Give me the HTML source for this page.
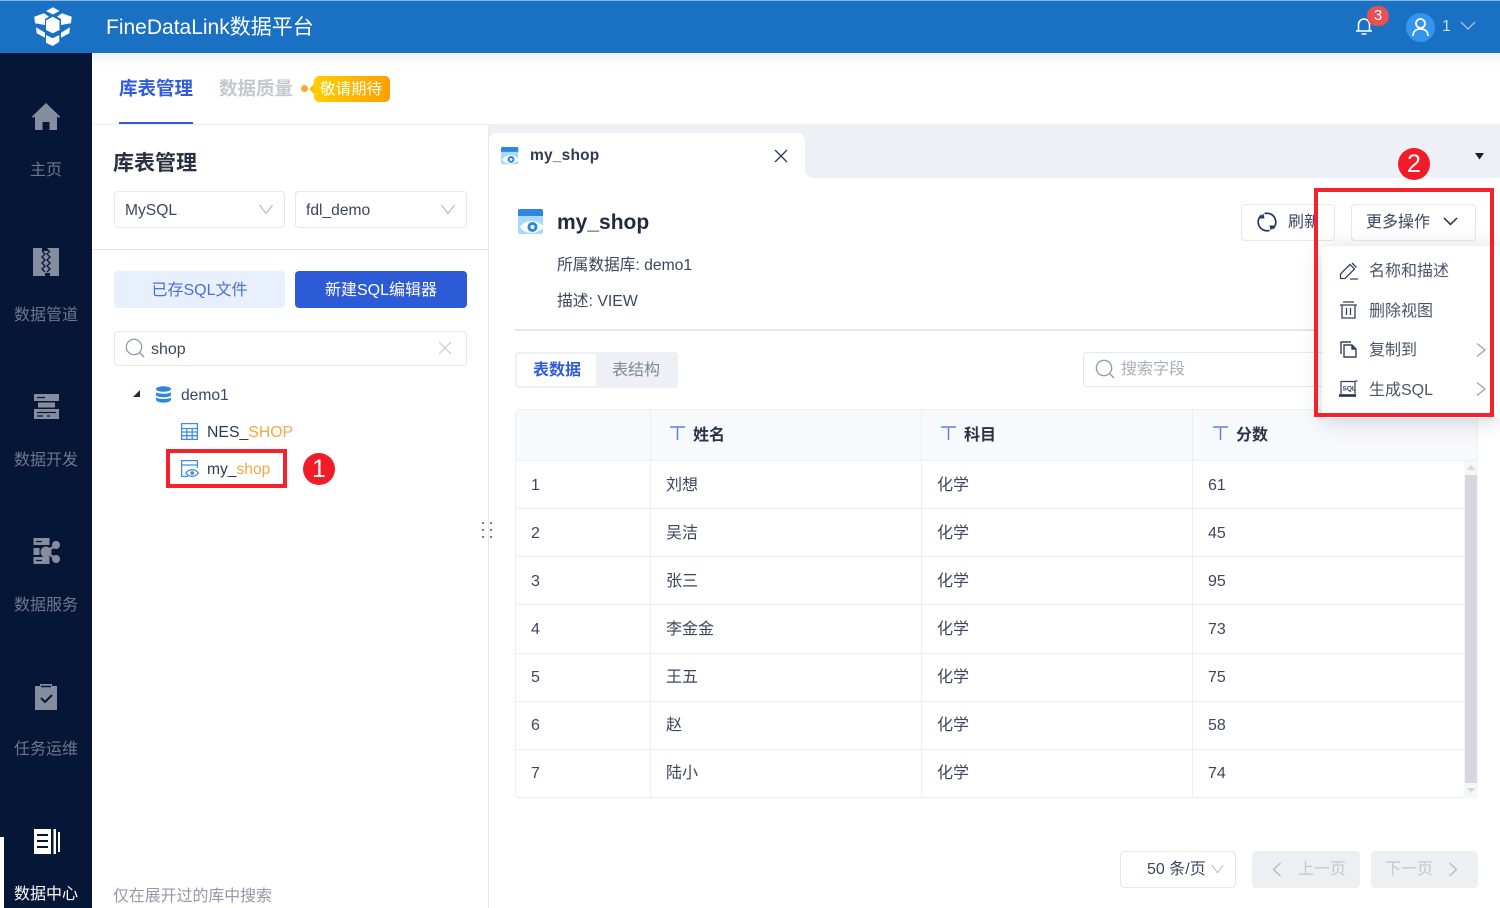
<!DOCTYPE html>
<html lang="zh"><head><meta charset="utf-8"><title>FineDataLink</title>
<style>
*{box-sizing:border-box}
html,body{margin:0;padding:0}
body{width:1500px;height:908px;overflow:hidden;position:relative;background:#fff;font-family:"Liberation Sans","Noto Sans CJK SC",sans-serif;color:#2b3a55;font-size:16px}
.a{position:absolute}
.t{position:absolute;white-space:nowrap;line-height:22px;margin-top:1px}
svg{position:absolute;overflow:visible}
.side{font-size:16px;color:#6f7789;width:92px;text-align:center;left:0}
.box{position:absolute;background:#fff;border:1px solid #e4e7f0;border-radius:4px}
.cell{font-size:16px;color:#3a4760}
.l{font-size:15.600px}
.hl{position:absolute;height:1px;background:#eceef4;left:516px;width:949px}
.vl{position:absolute;width:1px;background:#eceef4}
.red{position:absolute;border:4px solid #f5222d}
.num{position:absolute;width:32px;height:32px;border-radius:50%;background:#f01c28;color:#fff;text-align:center;font-size:25px;line-height:32px}
</style></head><body>

<div class="a" style="left:0;top:0;width:1500px;height:53px;background:#1a71c4;border-top:1px solid #8db6dd"></div>
<svg style="left:33px;top:7px" width="40" height="40" viewBox="0 0 40 40" fill="#fff"><path d="M13 4l7-3.700L26.500 4 20 7.500z"/><path d="M1.300 9.700L11 6.300l5 3.400-4 2.300v6l-10-1.700z"/><path d="M38.700 9.700L29 6.300l-5 3.400 4 2.300v6l10-1.700z"/><path d="M13 13.500l6.700-3.800 6.800 3.800v9.500l-6.800 3.300-6.700-3.300z"/><path d="M3 20.300l9 5.400v5l-8.300-4.400z"/><path d="M37 20.300l-9 5.400v5l8.300-4.400z"/><path d="M13 28l6.700 3.300 6.600-3.300v6.700L19.700 39 13 35.700z"/></svg>
<div class="t" style="left:106px;top:14px;font-size:21px;line-height:26px;color:#fff">FineDataLink数据平台</div>

<svg style="left:1354px;top:16px" width="20" height="20" viewBox="0 0 20 20" fill="none" stroke="#fff" stroke-width="1.600"><path d="M2 15h16M4.500 15V8.500a5.500 5.500 0 0 1 11 0V15M7.500 18h5"/></svg>
<div class="a" style="left:1367px;top:6px;width:22px;height:20px;border-radius:10px;background:#e85151;color:#fff;font-size:15px;line-height:20px;text-align:center">3</div>
<div class="a" style="left:1406px;top:13px;width:29px;height:29px;border-radius:50%;background:#3395f0"></div>
<svg style="left:1406px;top:13px" width="29" height="29" viewBox="0 0 29 29" fill="none" stroke="#fff" stroke-width="1.800"><circle cx="14.500" cy="10.500" r="4.500"/><path d="M7 23c0-4.500 3-7 7.500-7s7.500 2.500 7.500 7"/></svg>
<div class="t" style="left:1442px;top:15px;font-size:16px;color:#c7dcf2">1</div>
<svg style="left:1460px;top:21px" width="16" height="10" viewBox="0 0 16 10" fill="none" stroke="#9dbfe3" stroke-width="1.400"><path d="M1 1l7 7 7-7"/></svg>

<div class="a" style="left:0;top:53px;width:92px;height:855px;background:#061636"></div>
<svg style="left:32px;top:103px" width="28" height="28" viewBox="0 0 28 28" fill="#868d9e"><path d="M14 0L28 13.500l-1 1.500-2-1.500V27h-7.500v-8h-7v8H3V13.500L1 15l-1-1.500z"/></svg>
<div class="t side" style="top:159px">主页</div>
<svg style="left:33px;top:248px" width="26" height="28" viewBox="0 0 26 28" fill="#868d9e"><path d="M0 0h26v28H0z"/><path d="M9 0h5l3 3H9zM12 25h5v3h-5z" fill="#061636"/><path d="M9 3l3 3-3 3 3 3-3 3 3 3-3 3 3 3M17 3l-3 3 3 3-3 3 3 3-3 3 3 3-3 3" fill="none" stroke="#061636" stroke-width="1.300"/></svg>
<div class="t side" style="top:304px">数据管道</div>
<svg style="left:33px;top:393px" width="27" height="27" viewBox="0 0 27 27" fill="#868d9e"><path d="M1 1h25v7H1zM5 9.500h17v5H5zM1 16h25v10H1z"/><path d="M4 4.500h8M4 19.500h19M4 23h6M14 23h3" stroke="#061636" stroke-width="1.300"/></svg>
<div class="t side" style="top:449px">数据开发</div>
<svg style="left:33px;top:538px" width="27" height="27" viewBox="0 0 27 27" fill="#868d9e"><path d="M.5 0h16v7H.5zM.5 10h6v7h-6zM.5 19h16v7H.5z"/><path d="M3 3.500h6M3 22.500h6" stroke="#061636" stroke-width="1.300"/><circle cx="23" cy="7" r="4"/><circle cx="23" cy="21" r="4"/><circle cx="13" cy="14" r="5.500"/><path d="M13 14L23 7M13 14l10 7" stroke="#868d9e" stroke-width="2.500"/></svg>
<div class="t side" style="top:594px">数据服务</div>
<svg style="left:34px;top:683px" width="24" height="27" viewBox="0 0 24 27" fill="#868d9e"><path d="M1 3h5V1h12v2h5v24H1z"/><path d="M7 3.500h10" stroke="#061636" stroke-width="1.500"/><path d="M7 15l4 4 7-7" fill="none" stroke="#061636" stroke-width="2"/></svg>
<div class="t side" style="top:738px">任务运维</div>
<svg style="left:33px;top:828px" width="27" height="27" viewBox="0 0 27 27" fill="#fff"><path d="M1 1h17v25H1z"/><path d="M4 7h11M4 13h11M4 19h11" stroke="#061636" stroke-width="2"/><path d="M20.500 1h2.500v25h-2.500zM25 4h2v20h-2z"/></svg>
<div class="t side" style="top:883px;color:#fff">数据中心</div>
<div class="a" style="left:0;top:837px;width:4px;height:71px;background:#fff"></div>

<div class="a" style="left:92px;top:53px;width:1408px;height:14px;background:linear-gradient(#f0f1f3,#fff)"></div>
<div class="t" style="left:119px;top:77px;font-size:18.500px;font-weight:700;color:#2f5bdc">库表管理</div>
<div class="a" style="left:119px;top:122px;width:74px;height:3px;background:#2f5bdc"></div>
<div class="t" style="left:219px;top:77px;font-size:18.500px;font-weight:700;color:#c4c7cd">数据质量</div>
<div class="a" style="left:301px;top:85px;width:7px;height:7px;border-radius:50%;background:#f6a83c"></div>
<div class="a" style="left:309px;top:84px;width:0;height:0;border:5px solid transparent;border-right:5px solid #ffc107;border-left:0"></div>
<div class="a" style="left:314px;top:76px;width:76px;height:26px;border-radius:5px;background:linear-gradient(90deg,#ffce00,#ff9f00)"></div>
<div class="t" style="left:320px;top:78px;font-size:15.500px;color:#fff">敬请期待</div>
<div class="a" style="left:92px;top:124px;width:396px;height:1px;background:#eceef3"></div>

<div class="t" style="left:113px;top:150px;font-size:21px;line-height:26px;font-weight:700;color:#2a3040">库表管理</div>
<div class="box" style="left:114px;top:191px;width:171px;height:37px"></div>
<div class="t l" style="left:125px;top:199px;color:#3a4760">MySQL</div>
<svg style="left:259px;top:204px" width="14" height="11" viewBox="0 0 14 11" fill="none" stroke="#aeb4c2" stroke-width="1.100"><path d="M.5 1l6.500 8.500L13.500 1"/></svg>
<div class="box" style="left:295px;top:191px;width:172px;height:37px"></div>
<div class="t l" style="left:306px;top:199px;color:#3a4760">fdl_demo</div>
<svg style="left:441px;top:204px" width="14" height="11" viewBox="0 0 14 11" fill="none" stroke="#aeb4c2" stroke-width="1.100"><path d="M.5 1l6.500 8.500L13.500 1"/></svg>
<div class="a" style="left:92px;top:249px;width:396px;height:1px;background:#e4e6ec"></div>
<div class="a" style="left:114px;top:271px;width:171px;height:37px;border-radius:4px;background:#e8f0fe"></div>
<div class="t" style="left:114px;top:279px;width:171px;text-align:center;color:#4a6fd6">已存SQL文件</div>
<div class="a" style="left:295px;top:271px;width:172px;height:37px;border-radius:4px;background:#2d5bd8"></div>
<div class="t" style="left:295px;top:279px;width:172px;text-align:center;color:#fff">新建SQL编辑器</div>

<div class="box" style="left:114px;top:331px;width:353px;height:35px"></div>
<svg style="left:125px;top:338px" width="20" height="20" viewBox="0 0 20 20" fill="none" stroke="#8f9aad" stroke-width="1.300"><circle cx="9" cy="9" r="7.700"/><path d="M14.500 14.500L19 19"/></svg>
<div class="t" style="left:151px;top:338px;color:#3a4760">shop</div>
<svg style="left:438px;top:341px" width="14" height="14" viewBox="0 0 14 14" stroke="#c3c8d2" stroke-width="1.100"><path d="M1 1l12 12M13 1L1 13"/></svg>

<svg style="left:133px;top:390px" width="8" height="8" viewBox="0 0 8 8"><path d="M7 0v7H0z" fill="#1d2a3f"/></svg>
<svg style="left:155px;top:386px" width="17" height="17" viewBox="0 0 17 17" fill="#2f86dd"><ellipse cx="8.500" cy="3" rx="7.500" ry="2.800"/><path d="M1 6.300c2 2 13 2 15 0v3.200c-2 2.300-13 2.300-15 0zM1 11.500c2 2 13 2 15 0v2.500c-2 3.500-13 3.500-15 0z"/></svg>
<div class="t l" style="left:181px;top:384px;color:#3a4760">demo1</div>
<svg style="left:181px;top:423px" width="17" height="17" viewBox="0 0 17 17" fill="none" stroke="#3f8fe0" stroke-width="1.300"><path d="M.6.600h15.800v15.800H.6zM.6 5.500h15.800M.6 9h15.800M.6 12.700h15.800M5.800 5.500v11M11.200 5.500v11"/></svg>
<div class="t" style="left:207px;top:421px;font-size:15.800px;color:#2b3a55">NES_<span style="color:#f7a743">SHOP</span></div>
<svg style="left:181px;top:460px" width="18" height="18" viewBox="0 0 18 18" fill="none" stroke="#3f8fe0" stroke-width="1.300"><path d="M7 16.400H.6V.6h15.800V8M.6 5h15.800"/><path d="M5 13c3-4.500 9-4.500 12.500 0-3.500 4.500-9.500 4.500-12.500 0z" fill="#fff"/><circle cx="11.200" cy="13" r="1.900" fill="#3f8fe0" stroke="none"/></svg>
<div class="t" style="left:207px;top:458px;font-size:15.600px;color:#2b3a55">my_<span style="color:#f7a743">shop</span></div>
<div class="red" style="left:166px;top:449px;width:121px;height:39px"></div>
<div class="num" style="left:303px;top:453px">1</div>
<div class="t" style="left:113px;top:885px;font-size:15.900px;color:#9298a5">仅在展开过的库中搜索</div>

<div class="a" style="left:488px;top:124px;width:1px;height:784px;background:#e6e8ee"></div>
<div class="a" style="left:489px;top:124px;width:1011px;height:54px;background:#eef0f5"></div>
<div class="a" style="left:489px;top:133px;width:316px;height:46px;background:#fff;border-radius:8px 8px 0 0"></div>
<div class="a" style="left:805px;top:168px;width:10px;height:10px;background:#fff"></div>
<div class="a" style="left:805px;top:160px;width:20px;height:18px;background:#eef0f5;border-radius:0 0 0 8px"></div>
<svg style="left:501px;top:147px" width="18" height="18" viewBox="0 0 26 26"><rect y="0" width="25" height="25" rx="2" fill="#a8d8fb"/><path d="M0 2a2 2 0 0 1 2-2h21a2 2 0 0 1 2 2v5H0z" fill="#2f86dd"/><path d="M2 18c5-8 17-8 24 0-7 8-19 8-24 0z" fill="#fff"/><circle cx="14.500" cy="18" r="5" fill="#2f86dd"/><circle cx="14.500" cy="18" r="2" fill="#fff"/></svg>
<div class="t" style="left:530px;top:144px;font-size:15.500px;font-weight:700;color:#2f3b50;letter-spacing:.2px">my_shop</div>
<svg style="left:774px;top:149px" width="14" height="14" viewBox="0 0 14 14" stroke="#2b3a55" stroke-width="1.300"><path d="M1 1l12 12M13 1L1 13"/></svg>
<svg style="left:1475px;top:153px" width="9" height="7" viewBox="0 0 9 7"><path d="M0 0h9L4.500 6.500z" fill="#14213a"/></svg>

<svg style="left:518px;top:209px" width="26" height="26" viewBox="0 0 26 26"><rect y="0" width="25" height="25" rx="2" fill="#a8d8fb"/><path d="M0 2a2 2 0 0 1 2-2h21a2 2 0 0 1 2 2v5H0z" fill="#2f86dd"/><path d="M2 18c5-8 17-8 24 0-7 8-19 8-24 0z" fill="#fff"/><circle cx="14.500" cy="18" r="5" fill="#2f86dd"/><circle cx="14.500" cy="18" r="2" fill="#fff"/></svg>
<div class="t" style="left:557px;top:209px;font-size:21px;line-height:26px;font-weight:700;color:#1f2a3d;letter-spacing:0">my_shop</div>
<div class="t" style="left:557px;top:254px;font-size:15.700px;color:#3a4760">所属数据库: demo1</div>
<div class="t" style="left:557px;top:290px;font-size:15.800px;color:#3a4760">描述: VIEW</div>
<div class="a" style="left:515px;top:329px;width:800px;height:2px;background:#e3e5ea"></div>

<div class="box" style="left:1241px;top:204px;width:94px;height:37px"></div>
<svg style="left:1257px;top:212px" width="20" height="20" viewBox="0 0 20 20" fill="none" stroke="#1f3a60" stroke-width="1.700"><path d="M7.500 1.600A8.800 8.800 0 0 1 15.500 16.900"/><path d="M12.500 18.400A8.800 8.800 0 0 1 4.500 3.100"/><path d="M2.500 6.500L7.500 6.500 6.500 1.500zM17.500 13.500L12.500 13.500 13.500 18.500z" fill="#1f3a60" stroke="none"/></svg>
<div class="t" style="left:1288px;top:211px;color:#3a4760;width:27px;overflow:hidden">刷新</div>
<div class="box" style="left:1351px;top:204px;width:125px;height:37px"></div>
<div class="t" style="left:1366px;top:211px;color:#3a4760">更多操作</div>
<svg style="left:1443px;top:217px" width="15" height="9" viewBox="0 0 15 9" fill="none" stroke="#1f2a3d" stroke-width="1.500"><path d="M1 1l6.500 6.500L14 1"/></svg>

<div class="a" style="left:515px;top:352px;width:163px;height:36px;border-radius:4px;background:#eef0f5"></div>
<div class="a" style="left:517px;top:354px;width:79px;height:32px;border-radius:3px;background:#fff"></div>
<div class="t" style="left:533px;top:359px;font-weight:700;color:#2f5bdc">表数据</div>
<div class="t" style="left:612px;top:359px;color:#7f8694">表结构</div>
<div class="box" style="left:1083px;top:352px;width:250px;height:35px"></div>
<svg style="left:1095px;top:359px" width="20" height="20" viewBox="0 0 20 20" fill="none" stroke="#8f9aad" stroke-width="1.300"><circle cx="9" cy="9" r="7.700"/><path d="M14.500 14.500L19 19"/></svg>
<div class="t" style="left:1121px;top:358px;color:#a9aeb8">搜索字段</div>

<div class="a" style="left:515px;top:409px;width:963px;height:389px;border:1px solid #eceef4;border-radius:4px;background:#fff"></div>
<div class="a" style="left:516px;top:410px;width:961px;height:51px;background:#f8f9fc;border-bottom:1px solid #eceef4"></div>
<div class="vl" style="left:650px;top:410px;height:387px"></div>
<div class="vl" style="left:921px;top:410px;height:387px"></div>
<div class="vl" style="left:1192px;top:410px;height:387px"></div>
<div class="hl" style="top:508px"></div><div class="hl" style="top:556px"></div><div class="hl" style="top:604px"></div><div class="hl" style="top:653px"></div><div class="hl" style="top:701px"></div><div class="hl" style="top:749px"></div>

<svg style="left:670px;top:426px" width="15" height="14" viewBox="0 0 15 14" fill="none" stroke="#5c82d0" stroke-width="1.500"><path d="M0 1h15M7.500 1v13"/></svg>
<div class="t" style="left:693px;top:424px;font-weight:700;color:#2b3447">姓名</div>
<svg style="left:941px;top:426px" width="15" height="14" viewBox="0 0 15 14" fill="none" stroke="#5c82d0" stroke-width="1.500"><path d="M0 1h15M7.500 1v13"/></svg>
<div class="t" style="left:964px;top:424px;font-weight:700;color:#2b3447">科目</div>
<svg style="left:1213px;top:426px" width="15" height="14" viewBox="0 0 15 14" fill="none" stroke="#5c82d0" stroke-width="1.500"><path d="M0 1h15M7.500 1v13"/></svg>
<div class="t" style="left:1236px;top:424px;font-weight:700;color:#2b3447">分数</div>

<div class="t cell" style="left:531px;top:474px">1</div><div class="t cell" style="left:666px;top:474px">刘想</div><div class="t cell" style="left:937px;top:474px">化学</div><div class="t cell" style="left:1208px;top:474px">61</div>
<div class="t cell" style="left:531px;top:522px">2</div><div class="t cell" style="left:666px;top:522px">吴洁</div><div class="t cell" style="left:937px;top:522px">化学</div><div class="t cell" style="left:1208px;top:522px">45</div>
<div class="t cell" style="left:531px;top:570px">3</div><div class="t cell" style="left:666px;top:570px">张三</div><div class="t cell" style="left:937px;top:570px">化学</div><div class="t cell" style="left:1208px;top:570px">95</div>
<div class="t cell" style="left:531px;top:618px">4</div><div class="t cell" style="left:666px;top:618px">李金金</div><div class="t cell" style="left:937px;top:618px">化学</div><div class="t cell" style="left:1208px;top:618px">73</div>
<div class="t cell" style="left:531px;top:666px">5</div><div class="t cell" style="left:666px;top:666px">王五</div><div class="t cell" style="left:937px;top:666px">化学</div><div class="t cell" style="left:1208px;top:666px">75</div>
<div class="t cell" style="left:531px;top:714px">6</div><div class="t cell" style="left:666px;top:714px">赵</div><div class="t cell" style="left:937px;top:714px">化学</div><div class="t cell" style="left:1208px;top:714px">58</div>
<div class="t cell" style="left:531px;top:762px">7</div><div class="t cell" style="left:666px;top:762px">陆小</div><div class="t cell" style="left:937px;top:762px">化学</div><div class="t cell" style="left:1208px;top:762px">74</div>

<div class="a" style="left:1464px;top:461px;width:14px;height:337px;background:#f5f6f8"></div>
<div class="a" style="left:1465px;top:475px;width:12px;height:308px;background:#d4d7dd"></div>
<svg style="left:1467px;top:465px" width="8" height="5" viewBox="0 0 8 5"><path d="M4 0l4 5H0z" fill="#d4d7dd"/></svg>
<svg style="left:1467px;top:788px" width="8" height="5" viewBox="0 0 8 5"><path d="M4 5l4-5H0z" fill="#d4d7dd"/></svg>

<div class="box" style="left:1120px;top:851px;width:116px;height:37px"></div>
<div class="t" style="left:1147px;top:858px;color:#3a4760">50 条/页</div>
<svg style="left:1211px;top:864px" width="13" height="10" viewBox="0 0 14 11" fill="none" stroke="#b6bbc6" stroke-width="1.100"><path d="M.5 1l6.500 8.500L13.500 1"/></svg>
<div class="a" style="left:1252px;top:851px;width:108px;height:37px;border-radius:4px;background:#eeeff3"></div>
<svg style="left:1272px;top:862px" width="10" height="15" viewBox="0 0 10 15" fill="none" stroke="#b4b9c3" stroke-width="1.400"><path d="M8.500 1L1.500 7.500 8.500 14"/></svg>
<div class="t" style="left:1298px;top:858px;color:#c3c6cd">上一页</div>
<div class="a" style="left:1371px;top:851px;width:107px;height:37px;border-radius:4px;background:#eeeff3"></div>
<div class="t" style="left:1385px;top:858px;color:#c3c6cd">下一页</div>
<svg style="left:1448px;top:862px" width="10" height="15" viewBox="0 0 10 15" fill="none" stroke="#b4b9c3" stroke-width="1.400"><path d="M1.500 1l7 6.500-7 6.500"/></svg>

<svg style="left:481px;top:521px" width="13" height="18" viewBox="0 0 13 18" fill="#4a5060"><circle cx="2" cy="2" r="1"/><circle cx="10" cy="2" r="1"/><circle cx="2" cy="9" r="1"/><circle cx="10" cy="9" r="1"/><circle cx="2" cy="16" r="1"/><circle cx="10" cy="16" r="1"/></svg>

<div class="a" style="left:1322px;top:246px;width:178px;height:172px;background:#fff;box-shadow:0 3px 22px rgba(40,50,70,.2);border-radius:4px 0 0 4px"></div>
<svg style="left:1339px;top:262px" width="19" height="18" viewBox="0 0 19 18" fill="none" stroke="#34425e" stroke-width="1.300"><path d="M11 2.500L1.500 12v4.500h4.500L15.500 7zM13 1l4.500 4.500M11 17h8"/></svg>
<div class="t" style="left:1369px;top:260px;color:#4a5568">名称和描述</div>
<svg style="left:1340px;top:301px" width="17" height="18" viewBox="0 0 17 18" fill="none" stroke="#34425e" stroke-width="1.300"><path d="M0 4h17M3 1h11M2 4v13h13V4M6.500 7v7M10.500 7v7"/></svg>
<div class="t" style="left:1369px;top:300px;color:#4a5568">删除视图</div>
<svg style="left:1340px;top:341px" width="17" height="17" viewBox="0 0 17 17" fill="none" stroke="#34425e" stroke-width="1.400"><path d="M1 13V1h10"/><path d="M4 16V4h8l4 4v8z"/><path d="M12 4v4h4" fill="#34425e"/></svg>
<div class="t" style="left:1369px;top:339px;color:#4a5568">复制到</div>
<svg style="left:1476px;top:343px" width="10" height="14" viewBox="0 0 10 14" fill="none" stroke="#9aa1ae" stroke-width="1.200"><path d="M1 .5l8 6.500-8 6.500"/></svg>
<svg style="left:1339px;top:380px" width="19" height="18" viewBox="0 0 19 18" fill="none" stroke="#34425e" stroke-width="1.200"><path d="M2 14V1.500h14V14M16.500 1h2"/><path d="M0 15.500h17" stroke="#1c2c4c" stroke-width="2.500"/><text x="3.500" y="10.500" font-size="6.500" font-weight="700" fill="#34425e" stroke="none" font-family="Liberation Sans">SQL</text></svg>
<div class="t" style="left:1369px;top:379px;color:#4a5568">生成SQL</div>
<svg style="left:1476px;top:382px" width="10" height="14" viewBox="0 0 10 14" fill="none" stroke="#9aa1ae" stroke-width="1.200"><path d="M1 .5l8 6.500-8 6.500"/></svg>

<div class="red" style="left:1314px;top:188px;width:180px;height:229px"></div>
<div class="num" style="left:1398px;top:148px">2</div>
</body></html>
